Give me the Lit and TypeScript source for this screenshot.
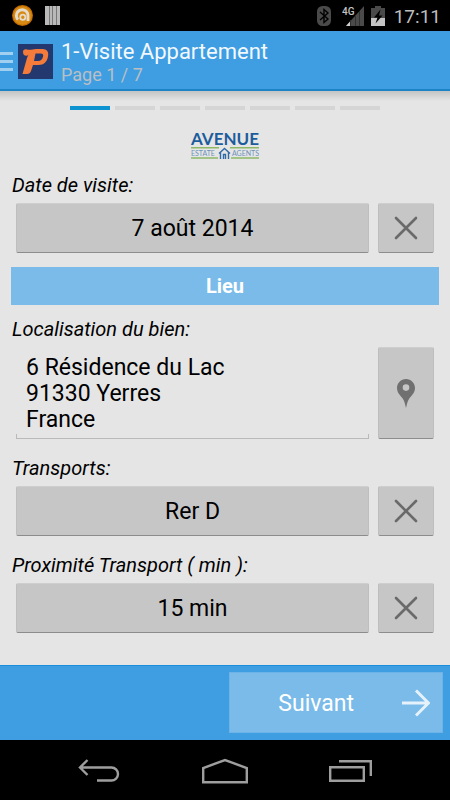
import { LitElement, html, css, svg, nothing } from "lit";
import { customElement, property, state } from "lit/decorators.js";
import { classMap } from "lit/directives/class-map.js";

const crossIcon = html`<svg class="icon" width="24" height="24" viewBox="0 0 24 24" aria-hidden="true">
  <path d="M2 2L22 22M22 2L2 22" fill="none" stroke="#6a6a6a" stroke-width="2.6" stroke-linecap="round" />
</svg>`;

const pinIcon = html`<svg class="icon" width="18" height="29" viewBox="0 0 18 29" aria-hidden="true">
  <path
    fill="#707070"
    fill-rule="evenodd"
    d="M9 0C4 0 0 4 0 9C0 14 4 17 6 20C7.600 22.600 8.300 26 9 29C9.700 26 10.400 22.600 12 20C14 17 18 14 18 9C18 4 14 0 9 0ZM9 5.300A3.300 3.300 0 1 1 9 11.900A3.300 3.300 0 1 1 9 5.300Z"
  />
</svg>`;

@customElement("status-bar")
export class StatusBar extends LitElement {
  static styles = css`
    :host {
      display: flex;
      align-items: center;
      gap: 12px;
      height: 31px;
      padding: 0 9px 0 12px;
      background: #000;
      color: #bdbdbd;
      font: 19px/24px Roboto, sans-serif;
    }
    svg {
      display: block;
      flex: none;
    }
    .system {
      display: flex;
      align-items: center;
      gap: 7px;
      margin-left: auto;
    }
    .signal {
      margin-left: 4px;
    }
    .clock {
      margin-left: 2px;
      padding-top: 2px;
    }
  `;

  render() {
    return html`
      <svg width="21" height="21" viewBox="0 0 21 21" aria-hidden="true">
        <circle cx="10.500" cy="10.500" r="10.500" fill="#c06c05" />
        <circle cx="10.500" cy="10.500" r="9.300" fill="#d88a12" />
        <path d="M6 14.600A5.800 5.800 0 1 1 16 11V16" fill="none" stroke="#e4dccd" stroke-width="2.800" />
        <circle cx="10.800" cy="12.300" r="2.600" fill="none" stroke="#e4dccd" stroke-width="1.800" />
      </svg>
      <svg width="15" height="19" viewBox="0 0 15 19" aria-hidden="true">
        <path fill="#b9b9b9" d="M0 0H4V19H0ZM5 0H7V19H5ZM8 0H11V19H8ZM12 0H15V19H12Z" />
        <path fill="#777" d="M4 0H5V19H4ZM7 0H8V19H7ZM11 0H12V19H11Z" />
      </svg>
      <div class="system">
        <svg width="14" height="20" viewBox="0 0 14 20" aria-hidden="true">
          <rect width="14" height="20" rx="5.500" fill="#4a4a4a" />
          <path d="M3 6L11 13L7 16.500V3.500L11 7L3 14" fill="none" stroke="#000" stroke-width="1.400" />
        </svg>
        <svg class="signal" width="22" height="20" viewBox="0 0 22 20" aria-hidden="true">
          <path d="M22 0V20H4Z" fill="#4a4a4a" />
          <path d="M8 15.500V20H4Z" fill="#d0d0d0" />
          <path d="M8.500 14V20M13.500 9V20M17.500 5V20" stroke="#303030" />
          <text x="0" y="9" fill="#c4c4c4" font-family="Roboto, sans-serif" font-size="10" font-weight="500">4G</text>
        </svg>
        <svg width="14" height="20" viewBox="0 0 14 20" aria-hidden="true">
          <path d="M4 0H10V2H14V12H0V2H4Z" fill="#4a4a4a" />
          <path d="M0 12H14V20H0Z" fill="#c4c4c4" />
          <path d="M9.500 3.500L3 11.500H6.500L4.500 17.500L11.500 9.500H8Z" fill="#000" />
        </svg>
        <span class="clock">17:11</span>
      </div>
    `;
  }
}

@customElement("title-bar")
export class TitleBar extends LitElement {
  @property() heading = "";
  @property({ type: Number }) page = 1;
  @property({ type: Number }) total = 1;

  static styles = css`
    :host {
      display: flex;
      align-items: center;
      box-sizing: border-box;
      height: 60px;
      border-bottom: 2px solid #1c83c6;
      background: #3f9ee2;
      font-family: Roboto, sans-serif;
    }
    .home {
      display: flex;
      align-items: center;
      gap: 5px;
      margin: 3px 8px 0 0;
      padding: 0;
      border: 0;
      background: none;
    }
    svg {
      display: block;
    }
    h1,
    p {
      margin: 0;
      font-weight: 400;
    }
    h1 {
      padding-top: 6px;
      color: #f2f8fd;
      font-size: 22px;
      line-height: 24px;
    }
    p {
      color: #b9bfc4;
      font-size: 18px;
      line-height: 22px;
    }
  `;

  render() {
    return html`
      <button class="home" aria-label="Menu">
        <svg width="13" height="19" viewBox="0 0 13 19" aria-hidden="true">
          <path d="M0 0H13V3H0ZM0 8H13V11H0ZM0 16H13V19H0Z" fill="#9fcff1" />
        </svg>
        <svg width="35" height="35" viewBox="0 0 35 35" aria-hidden="true">
          <rect width="35" height="35" fill="#22386f" />
          <path
            fill="#f47b3a"
            fill-rule="evenodd"
            d="M5 8C5 6 6.500 5 9 5.500C12 6.500 15 5 18 5H24.500C29 5 31 8 30 12.500C29 18 26 21 20.500 21H15L13 27C12.300 29 11 30 9 30H4.500L9 14L10.500 10.500C9 13 5 12 5 8ZM17.500 9.500L16 17H20C23 17 24.300 15.500 25 12.800C25.500 10.500 25 9.500 22.500 9.500Z"
          />
        </svg>
      </button>
      <div>
        <h1>${this.heading}</h1>
        <p>Page ${this.page} / ${this.total}</p>
      </div>
    `;
  }
}

@customElement("agency-logo")
export class AgencyLogo extends LitElement {
  static styles = css`
    :host {
      display: block;
    }
    svg {
      display: block;
      margin: 0 auto;
    }
  `;

  render() {
    return html`<svg width="80" height="36" viewBox="-4 -8 80 36" role="img" aria-label="Avenue Estate Agents">
      <text x="36" y="13" text-anchor="middle" fill="#1d5c9c" font-family="Lato, sans-serif" font-size="17" font-weight="700">AVENUE</text>
      <path d="M2 15.800H30M41 15.800H70M2 26H29M42 26H70" stroke="#8cb867" stroke-width="1.400" />
      <g fill="#6d92bb" font-family="Lato, sans-serif" font-size="7">
        <text x="2" y="23.500">ESTATE</text>
        <text x="70" y="23.500" text-anchor="end">AGENTS</text>
      </g>
      <path d="M30 21.500L35.500 16.500L41 21.500M31.500 20.500V27M39.500 20.500V27M34.500 27V22.500H36.500V27" fill="none" stroke="#2f6ba6" stroke-width="1.400" />
    </svg>`;
  }
}

interface Field {
  id: string;
  label: string;
  value: string;
}

@customElement("app-root")
export class AppRoot extends LitElement {
  @state() private page = 1;
  private readonly total = 7;

  static styles = css`
    :host {
      display: flex;
      flex-direction: column;
      min-height: 100vh;
      background: #e5e5e5;
      color: #000;
      font-family: Roboto, sans-serif;
    }
    button,
    textarea {
      box-sizing: border-box;
      margin: 0;
      font: inherit;
      color: inherit;
    }
    .icon {
      display: block;
    }
    main {
      flex: 1;
      padding: 0 11px 16px;
      background: linear-gradient(#c4c4c4, #e5e5e5 10px);
    }
    .steps {
      display: flex;
      justify-content: center;
      gap: 5px;
      margin: 0;
      padding: 15px 0 14px;
      list-style: none;
    }
    .step {
      width: 40px;
      height: 4px;
      background: #d5d5d5;
    }
    .step.current {
      background: #0d93cf;
    }
    .field {
      display: grid;
      grid-template-columns: 1fr 56px;
      column-gap: 9px;
      row-gap: 6px;
      padding: 0 5px;
      margin-top: 17px;
    }
    .field.first {
      margin-top: 13px;
    }
    .field.place {
      margin-top: 12px;
    }
    label {
      grid-column: 1 / -1;
      margin-left: -4px;
      font-size: 20px;
      font-style: italic;
      line-height: 24px;
    }
    .grey {
      display: flex;
      align-items: center;
      justify-content: center;
      min-height: 50px;
      padding: 0;
      border: 1px solid #bebebe;
      border-top-color: #cecece;
      border-bottom-color: #8c8c8c;
      border-radius: 2px;
      background: #c6c6c6;
      font-size: 23px;
      line-height: 26px;
    }
    .value {
      padding-top: 2px;
    }
    textarea {
      display: block;
      width: 100%;
      height: 92px;
      padding: 8px 10px 0;
      border: 0;
      border-bottom: 1px solid #b9b9b9;
      background:
        linear-gradient(#b9b9b9, #b9b9b9) left bottom / 1px 4px no-repeat,
        linear-gradient(#b9b9b9, #b9b9b9) right bottom / 1px 4px no-repeat;
      resize: none;
      overflow: hidden;
      outline: 0;
      font-size: 23px;
      line-height: 26px;
    }
    h2 {
      margin: 14px 0 0;
      background: #7abbe9;
      color: #fff;
      font-size: 20px;
      font-weight: 700;
      line-height: 38px;
      text-align: center;
    }
    footer {
      display: flex;
      justify-content: flex-end;
      padding: 6px 7px 7px;
      border-top: 1px solid #1a8fdc;
      background: #3f9ee2;
    }
    .next {
      display: grid;
      grid-template-columns: 1fr 28px;
      align-items: center;
      width: 49%;
      height: 61px;
      padding: 0 12px;
      border: 1px solid #6db3e8;
      background: #7abbe9;
      color: #fff;
      font-size: 23px;
      line-height: 26px;
    }
    .next span {
      padding: 2px 12px 0 0;
    }
    nav {
      display: flex;
      justify-content: center;
      gap: 8px;
      background: #000;
    }
    nav button {
      display: flex;
      align-items: center;
      justify-content: center;
      width: 118px;
      height: 60px;
      padding: 2px 0 0;
      border: 0;
      background: none;
    }
    nav path {
      fill: none;
      stroke: #9e9e9e;
      stroke-width: 2.4;
    }
  `;

  private renderField(field: Field, first = false) {
    return html`<div class=${classMap({ field: true, first })}>
      <label for=${field.id}>${field.label}</label>
      <button class="grey value" id=${field.id}>${field.value}</button>
      <button class="grey" aria-label="Effacer">${crossIcon}</button>
    </div>`;
  }

  private next() {
    this.page = Math.min(this.page + 1, this.total);
  }

  render() {
    const steps = Array.from({ length: this.total }, (_, i) => i + 1);
    return html`
      <status-bar></status-bar>
      <title-bar heading="1-Visite Appartement" .page=${this.page} .total=${this.total}></title-bar>
      <main>
        <ol class="steps">
          ${steps.map(
            (n) => html`<li
              class=${classMap({ step: true, current: n === this.page })}
              aria-current=${n === this.page ? "step" : nothing}
            ></li>`
          )}
        </ol>
        <agency-logo></agency-logo>
        ${this.renderField({ id: "date", label: "Date de visite:", value: "7 août 2014" }, true)}
        <h2>Lieu</h2>
        <div class="field place">
          <label for="address">Localisation du bien:</label>
          <textarea id="address" spellcheck="false" .value=${"6 Résidence du Lac\n91330 Yerres\nFrance"}></textarea>
          <button class="grey" aria-label="Localiser">${pinIcon}</button>
        </div>
        ${this.renderField({ id: "transport", label: "Transports:", value: "Rer D" })}
        ${this.renderField({ id: "distance", label: "Proximité Transport ( min ):", value: "15 min" })}
      </main>
      <footer>
        <button class="next" @click=${this.next}>
          <span>Suivant</span>
          <svg width="28" height="28" viewBox="0 0 28 28" aria-hidden="true">
            <path d="M0 14H26M14 1.500L26.500 14L14 26.500" fill="none" stroke="#e6f2fb" stroke-width="3" />
          </svg>
        </button>
      </footer>
      <nav>
        <button aria-label="Retour">
          <svg width="42" height="24" viewBox="0 0 42 24">
            ${svg`<path d="M2 8.500H33.500A6.500 6.500 0 0 1 33.500 21.500H19M9.500 1L2 8.500L9.500 16" />`}
          </svg>
        </button>
        <button aria-label="Accueil">
          <svg width="46" height="26" viewBox="0 0 46 26">
            ${svg`<path d="M1.200 24.300V10L23 2L44.800 10V24.300Z" />`}
          </svg>
        </button>
        <button aria-label="Applications">
          <svg width="44" height="24" viewBox="0 0 44 24">
            ${svg`<path d="M1.200 8.200H34.800V21.800H1.200ZM10 2.200H41.800V17" />`}
          </svg>
        </button>
      </nav>
    `;
  }
}
